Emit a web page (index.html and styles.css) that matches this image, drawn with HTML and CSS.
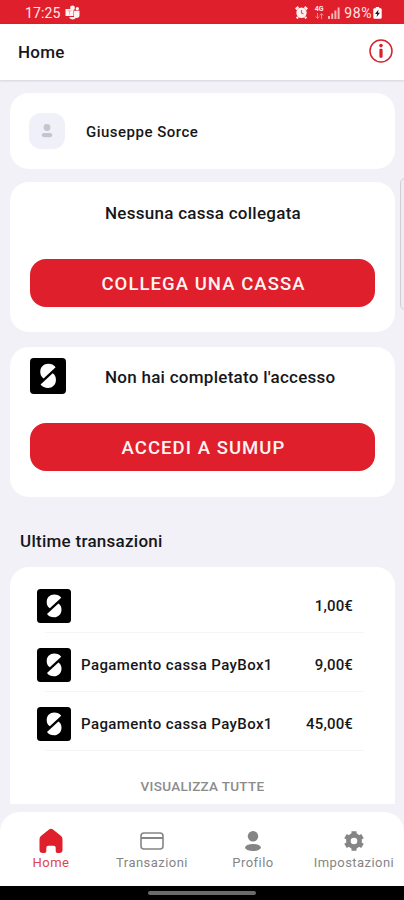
FILE: index.html
```html
<!DOCTYPE html>
<html lang="it">
<head>
<meta charset="utf-8">
<title>Home</title>
<link rel="stylesheet" href="styles.css">
</head>
<body>
<svg class="defs" width="0" height="0">
  <symbol id="sumup" viewBox="0 0 34 34">
    <rect width="34" height="34" rx="3.5" fill="#000"/>
    <path d="M12.800 19.300C10.500 17.800 9.600 15.500 9.700 12.800C9.900 8.500 13 5.500 17.200 5.500C20 5.500 22.700 6.600 24.200 8.700ZM21.400 14.500C23.700 16 24.600 18.300 24.500 21C24.300 25.300 21.200 28.300 17 28.300C14.200 28.300 11.500 27.200 10 25.100Z" fill="#fff"/>
  </symbol>
</svg>
<div class="phone">
  <div class="status">
    <span class="time">17:25</span>
    <svg class="teams" width="15" height="15" viewBox="0 0 15 15" fill="#fff3f1">
      <circle cx="7.500" cy="2.900" r="2.400"/><circle cx="12.300" cy="3.700" r="1.700"/>
      <path d="M.5 4h8v7h-8zM9 5.800h5.500v4.700a2.600 2.600 0 0 1-3.500 2.300A4 4 0 0 1 4 12h5z"/>
      <path d="M2.500 5.800h4M4.500 5.800v4" stroke="#f3b0b2" stroke-width="1"/>
    </svg>
    <span class="grow"></span>
    <svg class="alarm" width="13" height="13" viewBox="0 0 13 13">
      <circle cx="6.500" cy="6.800" r="5.200" fill="#fff0ee"/>
      <path d="M.8 3.200 3.500 1M12.200 3.200 9.500 1M3 11l-1.300 1.300M10 11l1.300 1.300" stroke="#fff0ee" stroke-width="2.400"/>
      <path d="M6.500 4v3l2 1" fill="none" stroke="#e2505a" stroke-width="1.100"/>
    </svg>
    <span class="net"><b>4G</b>
      <svg width="9" height="6" viewBox="0 0 9 6" fill="none" stroke="#f08a8e"><path d="M2.500 0v5M.8 3.500l1.700 2 1.700-2M6.500 6V1M4.800 2.500l1.700-2 1.700 2"/></svg>
    </span>
    <svg class="signal" width="12" height="12" viewBox="0 0 12 12" fill="#f7b5b5"><path d="M0 9h2v3H0zM3.200 6.500h2V12h-2zM6.400 3.500h2V12h-2zM9.600.5h2V12h-2z"/></svg>
    <span class="pct">98%</span>
    <svg class="battery" width="9" height="12" viewBox="0 0 9 12"><path d="M2.800 0h3.400v1.200H7.500q1.200 0 1.200 1.200v8.200q0 1.200-1.200 1.200h-6Q.3 11.800.3 10.600V2.400q0-1.200 1.200-1.200h1.300z" fill="#fff"/><path d="M5.600 2.500 2 7h2.200l-.7 3L7 5.800H4.900z" fill="#251014"/></svg>
  </div>
  <header class="header">
    <h1>Home</h1>
    <svg width="24" height="24" viewBox="0 0 24 24"><circle cx="12" cy="12" r="11" fill="none" stroke="#d6232c" stroke-width="1.500"/><circle cx="12" cy="6.600" r="1.800" fill="#d6232c"/><rect x="10.400" y="9.700" width="3.200" height="9" rx="1" fill="#d6232c"/></svg>
  </header>
  <main class="content">
    <section class="card user">
      <span class="avatar"><svg width="12" height="14" viewBox="0 0 12 14" fill="#c3c5cf"><circle cx="6" cy="3.500" r="3.400"/><rect x=".7" y="9" width="10.600" height="4.200" rx="2.100"/></svg></span>
      <span class="name">Giuseppe Sorce</span>
    </section>
    <section class="card action">
      <div class="action-head"><span class="slot"></span><h2>Nessuna cassa collegata</h2></div>
      <button>COLLEGA UNA CASSA</button>
    </section>
    <section class="card action">
      <div class="action-head"><span class="slot"><svg width="36" height="36"><use href="#sumup"/></svg></span><h2>Non hai completato l'accesso</h2></div>
      <button>ACCEDI A SUMUP</button>
    </section>
    <h2 class="section-title">Ultime transazioni</h2>
    <section class="list">
      <div class="row"><svg width="34" height="34"><use href="#sumup"/></svg><span class="label"></span><span class="amount">1,00€</span></div>
      <div class="row"><svg width="34" height="34"><use href="#sumup"/></svg><span class="label">Pagamento cassa PayBox1</span><span class="amount">9,00€</span></div>
      <div class="row"><svg width="34" height="34"><use href="#sumup"/></svg><span class="label">Pagamento cassa PayBox1</span><span class="amount">45,00€</span></div>
      <a class="all">VISUALIZZA TUTTE</a>
    </section>
  </main>
  <nav class="nav">
    <a class="active"><svg width="24" height="26" viewBox="0 0 24 26" fill="#df1f2c"><path d="M10 1.600q2-1.600 4 0l7.800 6.200q1.700 1.400 1.700 3.400v10.500q0 3.300-3.300 3.300h-1.700q-1.800 0-1.800-1.800v-3.400q0-2-2-2H9.300q-2 0-2 2v3.400Q7.300 25 5.500 25H3.800Q.5 25 .5 21.700V11.200q0-2 1.700-3.400z"/></svg><span>Home</span></a>
    <a><svg width="24" height="26" viewBox="0 0 24 26" fill="none" stroke="#858585" stroke-width="1.600"><rect x="1" y="5" width="22" height="16" rx="3"/><path d="M1 10h22" stroke-width="2"/></svg><span>Transazioni</span></a>
    <a><svg width="24" height="26" viewBox="0 0 24 26" fill="#858585"><circle cx="12" cy="8.300" r="5.200"/><ellipse cx="12" cy="19.500" rx="8" ry="3.500"/></svg><span>Profilo</span></a>
    <a><svg width="24" height="26" viewBox="0 0 24 26"><path d="M12 3.200v19.600M3.500 8.100l17 9.800M20.500 8.100l-17 9.800" stroke="#858585" stroke-width="5"/><circle cx="12" cy="13" r="5.600" fill="#fff" stroke="#858585" stroke-width="4.600"/></svg><span>Impostazioni</span></a>
  </nav>
  <div class="gesture"><i></i></div>
</div>
</body>
</html>
```
FILE: styles.css
```css
* { box-sizing: border-box; }
body { margin: 0; font-family: Roboto, sans-serif; color: #17171a; background: #f2f1f8; }
h1, h2 { margin: 0; font-weight: 500; font-size: 17px; letter-spacing: .27px; }
svg { display: block; flex: none; }
.defs { position: absolute; }
.phone { width: 404px; height: 900px; display: flex; flex-direction: column; overflow: hidden; position: relative; }
.phone::after { content: ""; position: absolute; left: 400px; top: 178px; width: 10px; height: 130px; border: 1px solid #cfced5; border-radius: 5px; background: #eeedf3; }

.status { height: 24px; flex: none; display: flex; align-items: center; padding: 2px 22px 0 25px; background: #df1f2c; border-bottom: 1px solid #cf1722; color: #ffe9e7; font-size: 14px; letter-spacing: .1px; }
.teams { margin-left: 5px; }
.grow { flex: 1; }
.alarm { margin-right: 6px; }
.net { width: 10px; height: 13px; display: flex; flex-direction: column; align-items: center; margin-right: 4px; }
.net b { font-size: 7px; line-height: 7px; letter-spacing: 0; }
.signal { margin-right: 4px; }
.pct { letter-spacing: .6px; margin-right: 1px; }

.header { height: 56px; flex: none; display: flex; align-items: center; justify-content: space-between; padding: 0 11px 1px 18px; background: #fff; box-shadow: 0 1px 2px #d4d3d9; }
.header svg { margin-bottom: 1px; }

.content { flex: 1; min-height: 0; padding: 13px 9px 0 10px; display: flex; flex-direction: column; overflow: hidden; }
.card { flex: none; background: #fff; border-radius: 19px; margin-bottom: 15px; }
.user { height: 76px; margin-bottom: 13px; display: flex; align-items: center; padding-left: 19px; }
.avatar { width: 36px; height: 36px; border-radius: 12px; background: #f0f1f8; display: flex; align-items: center; justify-content: center; }
.name { margin-left: 21px; padding-top: 2px; font-size: 15px; font-weight: 500; letter-spacing: .49px; }
.action { height: 150px; padding: 12px 20px 0; }
.action + .action { padding-top: 11px; }
.action-head { height: 36px; display: flex; align-items: center; }
.action-head h2 { padding-top: 2px; letter-spacing: .27px; }
.slot { width: 75px; }
button { display: block; width: 100%; height: 48px; margin-top: 29px; padding: 1px 0 0 2px; border: 0; border-radius: 16px; background: #df1f2c; color: #fff4f2; font: 500 18.5px Roboto, sans-serif; letter-spacing: 1.06px; }
.section-title { flex: none; margin: 18px 0 0 10px; padding-top: 1px; line-height: 20px; height: 37px; }
.list { flex: none; height: 237px; background: #fff; border-radius: 19px 19px 0 0; padding: 7px 31px 0 27px; display: flex; flex-direction: column; }
.row { height: 59px; flex: none; display: flex; align-items: center; padding: 4px 11px 0 0; font-size: 15px; font-weight: 500; background: linear-gradient(#f5f4f7, #f5f4f7) 8px 100% / 100% 1px no-repeat; }
.label { flex: 1; margin-left: 10px; letter-spacing: .4px; }
.amount { letter-spacing: .15px; }
.all { align-self: center; margin: 26px 0 0 4px; font-size: 13.5px; font-weight: 500; line-height: 18px; letter-spacing: .3px; color: #8b8b8b; }

.nav { flex: none; height: 74px; background: #fff; border-radius: 20px 20px 0 0; display: grid; grid-template-columns: repeat(4, 101px); }
.nav a { display: flex; flex-direction: column; align-items: center; padding-top: 16px; font-size: 13px; line-height: 18px; letter-spacing: .45px; color: #858585; }
.nav .active { color: #e0434d; }
.nav span { padding-left: 1px; white-space: nowrap; }
.gesture { flex: none; height: 14px; background: #000; display: flex; justify-content: center; align-items: center; }
.gesture i { width: 108px; height: 4px; border-radius: 2px; background: #6b6b6b; }
```
